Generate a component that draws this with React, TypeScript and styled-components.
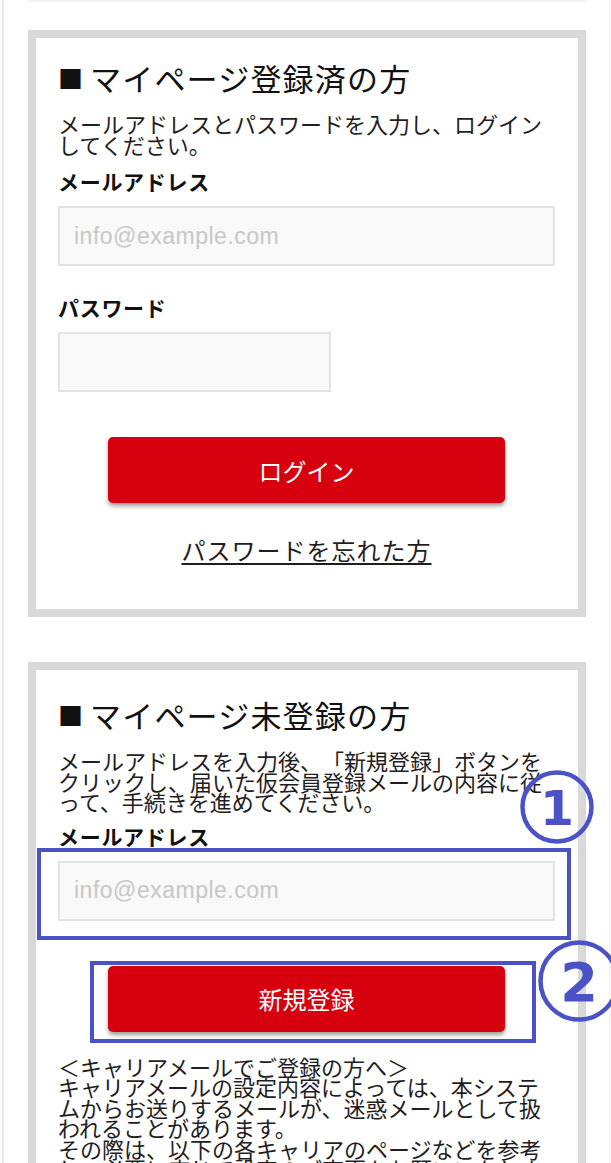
import React from "react";
import styled, { createGlobalStyle } from "styled-components";

const GlobalStyle = createGlobalStyle`
  html, body { margin: 0; padding: 0; background: #ffffff; }
  body {
    overflow: hidden;
    font-family: "Noto Sans CJK JP", "Noto Sans", sans-serif;
    color: #1c1c1c;
    text-spacing-trim: space-all;
  }
  * { box-sizing: border-box; }
`;

const Page = styled.div`
  display: flex;
  width: 611px;
  height: 1163px;
  padding-left: 2px;
  overflow: hidden;
`;

const Rail = styled.div<{ $color: string; $width: number }>`
  flex: 0 0 ${(p) => p.$width}px;
  background: ${(p) => p.$color};
`;

const Main = styled.main`
  flex: 0 0 605px;
  padding: 0 23px 0 24px;
`;

const TopRule = styled.div`
  height: 2px;
  background: #f1f1f1;
`;

const Card = styled.section<{ $gap: number; $padTop: number }>`
  position: relative;
  margin-top: ${(p) => p.$gap}px;
  border: 8px solid #d9d9d9;
  padding: ${(p) => p.$padTop}px 23px 44px 22px;
  background: #fff;
`;

const Heading = styled.h2`
  margin: 0;
  font-size: 31px;
  font-weight: 400;
  line-height: 40px;
  letter-spacing: 1.2px;
  color: #111;
`;

const Mark = styled.span`
  font-size: 25px;
  letter-spacing: 0;
  margin-right: 7px;
  vertical-align: 2px;
`;

const Lead = styled.p`
  margin: 15px 0 0;
  font-size: 22px;
  line-height: 20.5px;
  color: #1e1e1e;
`;

const Label = styled.label<{ $top: number }>`
  display: block;
  margin-top: ${(p) => p.$top}px;
  font-size: 21px;
  font-weight: 700;
  line-height: 28px;
  letter-spacing: 0.7px;
  color: #111;
`;

const Field = styled.div`
  position: relative;
  margin-top: 11px;
`;

const TextInput = styled.input<{ $width: string }>`
  display: block;
  width: ${(p) => p.$width};
  height: 60px;
  border: 2px solid #e3e3e3;
  background: #f9f9f9;
  padding: 0 14px;
  font-family: "Liberation Sans", Arial, sans-serif;
  font-size: 23px;
  letter-spacing: 0.5px;
  color: #333;
  outline: none;
  &::placeholder { color: #c7c7c7; }
`;

const ButtonWrap = styled.div<{ $top: number }>`
  position: relative;
  width: 397px;
  margin: ${(p) => p.$top}px auto 0;
`;

const RedButton = styled.button`
  display: block;
  width: 100%;
  height: 66px;
  border: none;
  border-radius: 5px;
  background: #d7000f;
  box-shadow: 0 3px 4px rgba(0, 0, 0, 0.38);
  color: #fff;
  font-family: "Noto Sans CJK JP", sans-serif;
  font-size: 24px;
  font-weight: 400;
  cursor: pointer;
`;

const ForgotLink = styled.a`
  display: block;
  margin-top: 32px;
  text-align: center;
  font-size: 24px;
  line-height: 30px;
  letter-spacing: 1px;
  color: #1e1e1e;
  text-decoration: underline;
  text-underline-offset: 3px;
`;

const Note = styled.p`
  margin: 24px 0 0;
  font-size: 22px;
  line-height: 20.5px;
  color: #1e1e1e;
`;

const Highlight = styled.div<{ $t: number; $r: number; $b: number; $l: number }>`
  position: absolute;
  top: ${(p) => p.$t}px;
  right: ${(p) => p.$r}px;
  bottom: ${(p) => p.$b}px;
  left: ${(p) => p.$l}px;
  border: 4px solid #4a52c6;
  pointer-events: none;
`;

const Badge = styled.svg<{ $x: number; $y: number }>`
  position: absolute;
  left: ${(p) => p.$x}px;
  top: ${(p) => p.$y}px;
  overflow: visible;
  pointer-events: none;
`;

function CircledNumber({ n, x, y, size }: { n: string; x: number; y: number; size: number }) {
  const c = size / 2;
  return (
    <Badge $x={x} $y={y} width={size} height={size} viewBox={`0 0 ${size} ${size}`}>
      <circle cx={c} cy={c} r={c - 2.5} fill="none" stroke="#4a52c6" strokeWidth={4.5} />
      <text
        x={c}
        y={c + size * 0.245}
        textAnchor="middle"
        fontFamily="'DejaVu Sans', sans-serif"
        fontWeight={700}
        fontSize={size * 0.66}
        fill="#4a52c6"
      >
        {n}
      </text>
    </Badge>
  );
}

export default function App() {
  return (
    <>
      <GlobalStyle />
      <Page>
        <Rail $color="#efe3ea" $width={2} />
        <Main>
          <TopRule />
          <Card $gap={28} $padTop={20}>
            <Heading>
              <Mark>■</Mark>マイページ登録済の方
            </Heading>
            <Lead>メールアドレスとパスワードを入力し、ログインしてください。</Lead>
            <Label $top={13}>メールアドレス</Label>
            <Field>
              <TextInput $width="100%" type="email" placeholder="info@example.com" />
            </Field>
            <Label $top={27}>パスワード</Label>
            <Field>
              <TextInput $width="273px" type="password" />
            </Field>
            <ButtonWrap $top={45}>
              <RedButton>ログイン</RedButton>
            </ButtonWrap>
            <ForgotLink href="#">パスワードを忘れた方</ForgotLink>
          </Card>

          <Card $gap={45} $padTop={25}>
            <Heading>
              <Mark>■</Mark>マイページ未登録の方
            </Heading>
            <Lead>
              メールアドレスを入力後、「新規登録」ボタンをクリックし、届いた仮会員登録メールの内容に従って、手続きを進めてください。
            </Lead>
            <Label $top={10}>メールアドレス</Label>
            <Field>
              <TextInput $width="100%" type="email" placeholder="info@example.com" />
              <Highlight $t={-13} $r={-16} $b={-19} $l={-21} />
            </Field>
            <ButtonWrap $top={45}>
              <RedButton>新規登録</RedButton>
              <Highlight $t={-5} $r={-31} $b={-11} $l={-18} />
            </ButtonWrap>
            <Note>
              ＜キャリアメールでご登録の方へ＞
              <br />
              キャリアメールの設定内容によっては、本システムからお送りするメールが、迷惑メールとして扱われることがあります。
              <br />
              その際は、以下の各キャリアのページなどを参考し、必要に応じて設定のご変更をお願いいたします。
            </Note>
            <CircledNumber n="1" x={484} y={100} size={74} />
            <CircledNumber n="2" x={502} y={270} size={82} />
          </Card>
        </Main>
        <Rail $color="#f0f0f0" $width={1} />
      </Page>
    </>
  );
}
